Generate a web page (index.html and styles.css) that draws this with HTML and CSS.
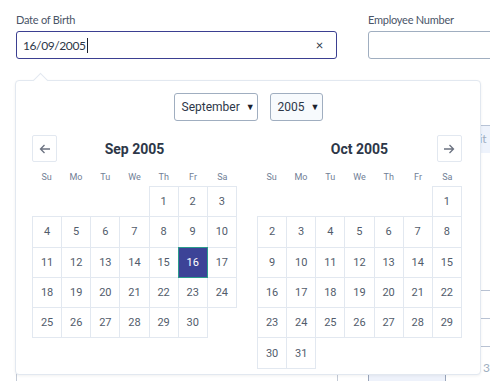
FILE: index.html
```html
<!DOCTYPE html>
<html lang="en">
<head>
  <meta charset="UTF-8">
  <meta name="viewport" content="width=device-width, initial-scale=1.0">
  <title>Employee Form</title>
  <link rel="stylesheet" href="styles.css">
</head>
<body>
  <div class="form-row">
    <div class="field field-dob">
      <label class="field-label">Date of Birth</label>
      <div class="input input-active">
        <span class="input-value">16/09/2005</span><span class="caret"></span>
        <span class="clear">&times;</span>
      </div>
    </div>
    <div class="field field-emp">
      <label class="field-label">Employee Number</label>
      <div class="input"></div>
    </div>
  </div>

  <div class="behind">
    <div class="toolbar">
      <div class="tool-btn">Edit</div>
    </div>
    <div class="table">
      <div class="table-row"></div>
      <div class="table-row"></div>
      <div class="table-row short"></div>
    </div>
    <div class="form-row lower">
      <div class="input wide"></div>
      <div class="input tinted"></div>
      <div class="hint">3</div>
    </div>
  </div>

  <div class="picker">
    <div class="picker-arrow"></div>
    <div class="selects">
      <div class="select select-month">September <span class="tri">&#9660;</span></div>
      <div class="select select-year">2005 <span class="tri">&#9660;</span></div>
    </div>
    <div class="months">
      <div class="month">
        <div class="month-head">
          <button class="nav">
            <svg width="12" height="10" viewBox="0 0 12 10"><path d="M11 5H1.5M5.5 1L1.5 5l4 4" fill="none" stroke="#6b7280" stroke-width="1.3"/></svg>
          </button>
          <div class="month-title">Sep 2005</div>
          <div class="nav-space"></div>
        </div>
        <div class="weekdays">
          <span>Su</span><span>Mo</span><span>Tu</span><span>We</span><span>Th</span><span>Fr</span><span>Sa</span>
        </div>
        <div class="days" id="sep"></div>
      </div>
      <div class="month">
        <div class="month-head">
          <div class="nav-space"></div>
          <div class="month-title">Oct 2005</div>
          <button class="nav">
            <svg width="12" height="10" viewBox="0 0 12 10"><path d="M1 5h9.5M6.5 1l4 4-4 4" fill="none" stroke="#6b7280" stroke-width="1.3"/></svg>
          </button>
        </div>
        <div class="weekdays">
          <span>Su</span><span>Mo</span><span>Tu</span><span>We</span><span>Th</span><span>Fr</span><span>Sa</span>
        </div>
        <div class="days" id="oct"></div>
      </div>
    </div>
  </div>

  <script>
    function buildMonth(id, startDay, total, selected) {
      const grid = document.getElementById(id);
      for (let i = 0; i < startDay; i++) {
        const blank = document.createElement('div');
        blank.className = 'blank';
        grid.appendChild(blank);
      }
      for (let d = 1; d <= total; d++) {
        const cell = document.createElement('div');
        cell.className = 'day';
        if (d === selected) cell.classList.add('selected');
        cell.textContent = d;
        grid.appendChild(cell);
      }
    }
    buildMonth('sep', 4, 30, 16);
    buildMonth('oct', 6, 31, 0);
  </script>
</body>
</html>
```

FILE: styles.css
```css
body {
    margin: 0;
    font-family: Lato, "Open Sans", sans-serif;
    background-color: #fff;
    color: #2d3748;
    overflow: hidden;
    position: relative;
    height: 381px;
}
.form-row {
    display: flex;
    padding: 12px 0 0 16px;
    gap: 31px;
}
.field-label {
    display: block;
    font-size: 11px;
    letter-spacing: -0.25px;
    line-height: 15px;
    color: #4a5568;
    margin-bottom: 4px;
}
.field-dob {
    width: 321px;
    flex-shrink: 0;
}
.field-emp {
    width: 200px;
    flex-shrink: 0;
}
.input {
    height: 28px;
    box-sizing: border-box;
    border: 1px solid #a0aec0;
    border-radius: 3px;
    background: #fff;
    display: flex;
    align-items: center;
    padding-left: 6px;
    font-size: 12px;
    letter-spacing: -0.4px;
    flex-shrink: 0;
}
.input-active {
    border-color: #3b3f91;
}
.caret {
    display: inline-block;
    width: 1px;
    height: 15px;
    background: #1a202c;
    margin-left: 1px;
}
.clear {
    margin-left: auto;
    margin-right: 13px;
    font-size: 13px;
    color: #2d3748;
}

/* content hidden behind the picker */
.behind {
    position: relative;
}
.toolbar {
    display: flex;
    padding-left: 476px;
    margin-top: 66px;
}
.tool-btn {
    height: 28px;
    box-sizing: border-box;
    border-top: 1px solid #b7c3d6;
    background: #eef3fc;
    color: #a0aec0;
    font-size: 12px;
    line-height: 26px;
    width: 60px;
    text-indent: -10px;
}
.table {
    margin-left: 440px;
    margin-top: 137px;
}
.table-row {
    height: 27px;
    border-top: 1px solid #b8c2d3;
}
.table-row.short {
    height: 10px;
}
.form-row.lower {
    padding-top: 9px;
    gap: 0;
    align-items: flex-start;
}
.input.wide {
    width: 322px;
    height: 30px;
    border-color: #c3cad6;
}
.input.tinted {
    width: 78px;
    height: 30px;
    margin-left: 30px;
    background: #eef2fb;
    border-color: #9aa6bb;
}
.hint {
    flex-shrink: 0;
    margin-left: 37px;
    margin-top: -6px;
    font-size: 12px;
    color: #a0aec0;
}

/* date picker popup */
.picker {
    position: absolute;
    left: 15px;
    top: 80px;
    width: 466px;
    height: 295px;
    box-sizing: border-box;
    background: #fff;
    border: 1px solid #e2e8f0;
    border-radius: 4px;
    box-shadow: 0 1px 3px rgba(0, 0, 0, 0.06);
    padding: 12px 18px 0 16px;
    font-family: Roboto, sans-serif;
}
.picker-arrow {
    position: absolute;
    left: 19px;
    top: -6px;
    width: 10px;
    height: 10px;
    background: #fff;
    border-top: 1px solid #e2e8f0;
    border-left: 1px solid #e2e8f0;
    transform: rotate(45deg);
}
.selects {
    display: flex;
    justify-content: center;
    gap: 12px;
    padding-left: 2px;
}
.select {
    height: 28px;
    box-sizing: border-box;
    border: 1px solid #a0aec0;
    border-radius: 3px;
    display: flex;
    align-items: center;
    padding: 0 7px;
    font-size: 12px;
    color: #2d3748;
}
.select-month {
    width: 84px;
    justify-content: space-between;
}
.select-year {
    width: 53px;
    background: #f7fafd;
}
.tri {
    font-size: 9px;
    color: #1a202c;
    margin-left: 6px;
}
.months {
    display: flex;
    gap: 20px;
    margin-top: 14px;
}
.month {
    width: 205px;
}
.month-head {
    display: flex;
    align-items: center;
    justify-content: space-between;
    height: 27px;
}
.nav, .nav-space {
    width: 25px;
    height: 27px;
}
.nav {
    border: 1px solid #e2e8f0;
    border-radius: 2px;
    background: #fff;
    padding: 0;
    display: flex;
    align-items: center;
    justify-content: center;
}
.month-title {
    font-size: 14px;
    font-weight: bold;
    color: #2d3748;
}
.weekdays {
    display: grid;
    grid-template-columns: repeat(7, 1fr);
    height: 24px;
    box-sizing: border-box;
    padding-bottom: 4px;
    align-items: end;
    text-align: center;
    font-size: 9px;
    color: #718096;
}
.days {
    display: grid;
    grid-template-columns: repeat(7, 29.14px);
    grid-auto-rows: 30.3px;
}
.day {
    border: 1px solid #e2e8f0;
    margin: 0 -1px -1px 0;
    display: flex;
    align-items: center;
    justify-content: center;
    font-size: 11px;
    color: #525c6b;
}
.day.selected {
    background: #3c4397;
    border-color: #2b9c8c;
    color: #fff;
    position: relative;
}
```
